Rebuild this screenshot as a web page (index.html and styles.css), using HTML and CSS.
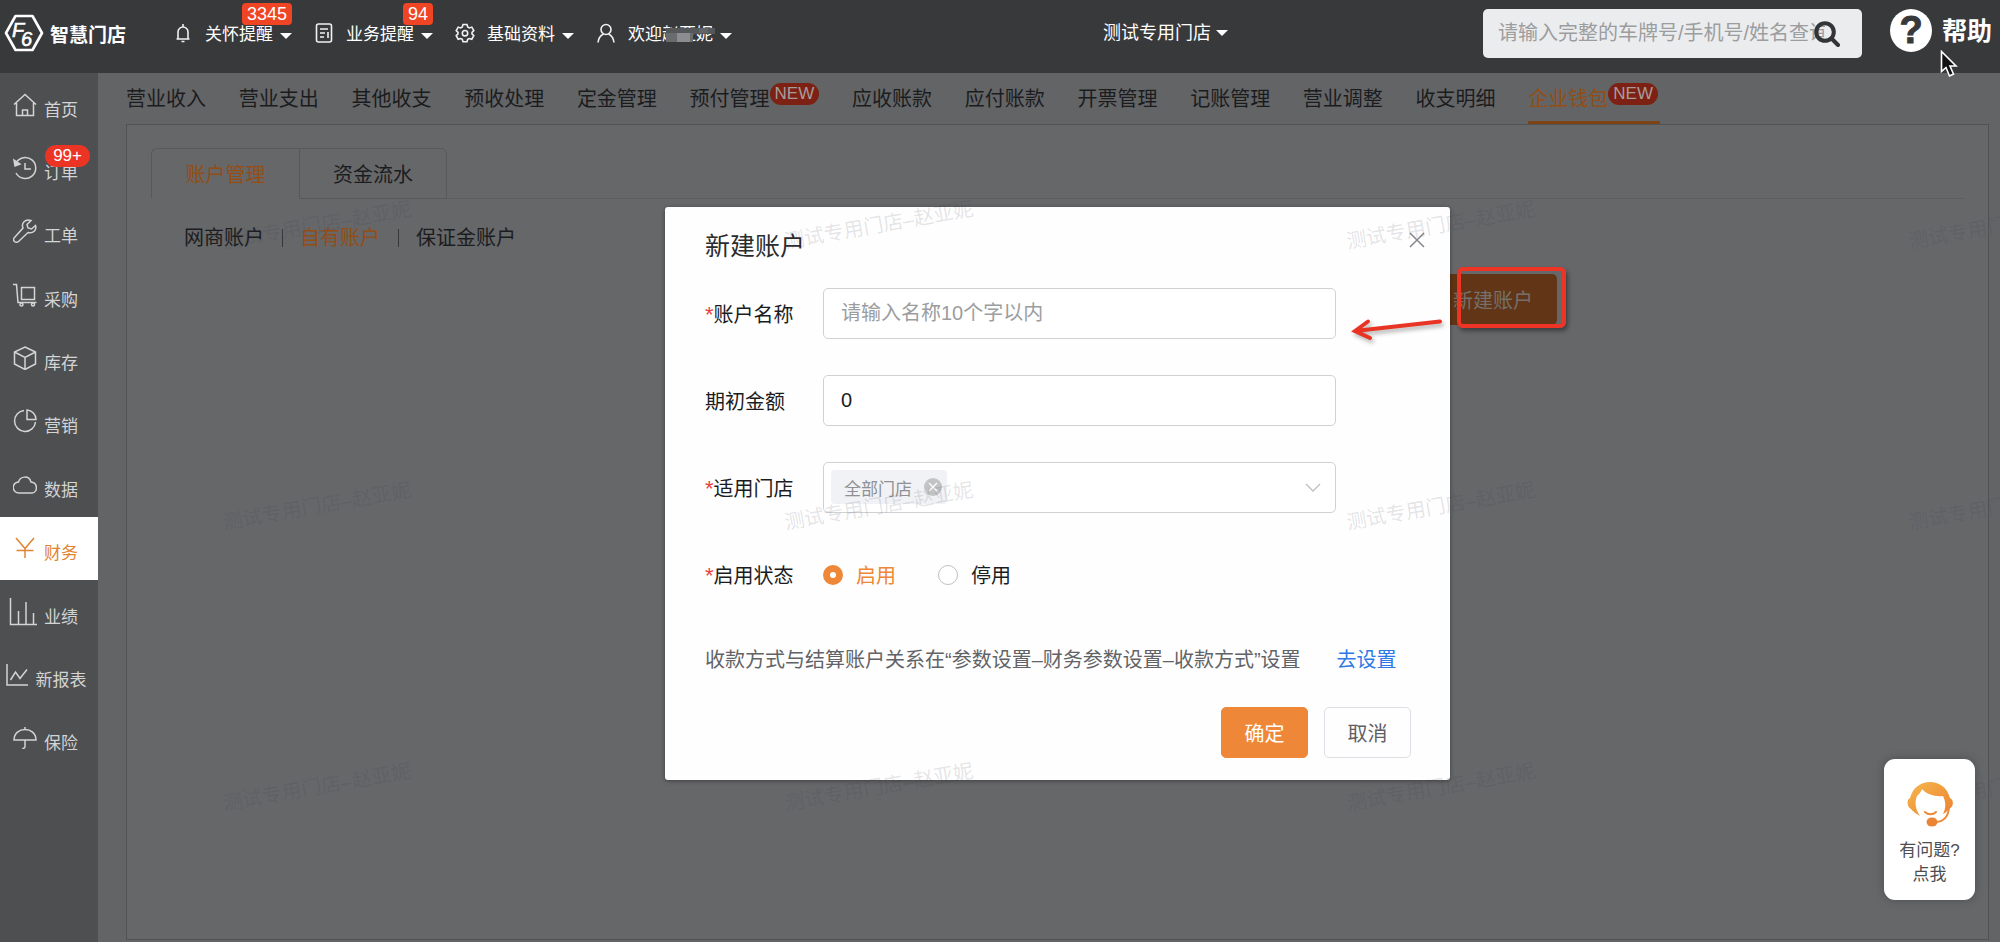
FILE: index.html
```html
<!DOCTYPE html>
<html lang="zh-CN">
<head>
<meta charset="utf-8">
<title>智慧门店 - 企业钱包</title>
<link rel="stylesheet" href="styles.css">
</head>
<body>
<div class="app">
  <header class="topbar">
    <a class="logo" href="#">
      <svg class="logo-mark" viewBox="0 0 40 38" aria-hidden="true">
        <path d="M11.500 2h17L38 19l-9.500 17h-17L2 19z" fill="none" stroke="#fff" stroke-width="2.600" stroke-linejoin="round"/>
        <text class="logo-f" x="8" y="23">F</text>
        <text class="logo-f" x="17" y="32">6</text>
      </svg>
      <span>智慧门店</span>
    </a>
    <nav class="topnav">
      <button class="top-item" type="button">
        <svg class="top-icon" viewBox="0 0 20 20"><path d="M3.500 16h13M5 16V9a5 5 0 0 1 10 0v7M10 4V1M8.500 18.500h3"/></svg>
        <span>关怀提醒</span><i class="caret"></i><b class="count">3345</b>
      </button>
      <button class="top-item" type="button">
        <svg class="top-icon" viewBox="0 0 20 20"><rect x="2.500" y="1" width="15" height="18" rx="2"/><path d="M6 6h8M6 10h5M6 14h4M14 9v6"/></svg>
        <span>业务提醒</span><i class="caret"></i><b class="count">94</b>
      </button>
      <button class="top-item" type="button">
        <svg class="top-icon" viewBox="0 0 20 20"><path d="M8 1.500h4l.7 2.500 1.600.9 2.500-.8 2 3.500-1.800 1.800v1.500l1.800 1.800-2 3.500-2.500-.7-1.600.9-.7 2.400H8l-.7-2.400-1.600-.9-2.500.7-2-3.500L3 10.900V9.400L1.200 7.600l2-3.500 2.500.8L7.300 4z"/><circle cx="10" cy="10.200" r="2.700"/></svg>
        <span>基础资料</span><i class="caret"></i>
      </button>
      <button class="top-item" type="button">
        <svg class="top-icon" viewBox="0 0 20 20"><circle cx="10" cy="6.500" r="5"/><path d="M2 19.500c.5-4.500 2.500-7 5.500-8.500M18 19.500c-.5-4.500-2.500-7-5.500-8.500"/></svg>
        <span class="user">欢迎赵亚妮<svg class="mosaic" viewBox="0 0 52 14" aria-hidden="true"><path fill="#55585a" d="M3 0h49v6H3z"/><path fill="#696c6e" d="M3 5h27v9H3z"/><path fill="#8b8d8f" d="M14 5h13v9H14z"/><path fill="#626567" d="M36 0h9v5h-9z"/></svg></span><i class="caret"></i>
      </button>
    </nav>
    <div class="store-wrap"><button class="store" type="button">测试专用门店<i class="caret"></i></button></div>
    <div class="search">
      <input type="text" aria-label="搜索" placeholder="请输入完整的车牌号/手机号/姓名查询">
      <button type="button" aria-label="查询"><svg viewBox="0 0 26 26"><circle cx="11" cy="11" r="8.800"/><path d="M18 18l6 6"/></svg></button>
    </div>
    <a class="help" href="#"><span class="help-mark">?</span><span>帮助</span></a>
  </header>

  <div class="body">
    <nav class="side">
      <a href="#"><svg viewBox="0 0 24 24"><path d="M1 11.500L12 1.500l11 10M3.500 10v12.500h17V10M9.500 22v-5h5v5"/></svg>首页</a>
      <a href="#"><svg viewBox="0 0 24 24"><path d="M3 7a10.500 10.500 0 1 1 0 10M12 7v6h6"/><path class="solid" d="M1 4l1 6 5-2z"/></svg>订单<b class="dot">99+</b></a>
      <a href="#"><svg viewBox="0 0 24 24"><path d="M22.500 6.500l-4 3.500-3.500-1-1-3.500 4-4c-6-2-10 3-8 7.500L1.500 18.500a2.800 2.800 0 0 0 4 4L15 13.500c5 1.500 9-2.500 7.500-7z"/></svg>工单</a>
      <a href="#"><svg viewBox="0 0 24 24"><path d="M0 1.500h3.500L5 19.500h18.500M8.500 4.500h13v12h-13z"/><circle cx="8.500" cy="21.500" r="1.500"/><circle cx="20" cy="21.500" r="1.500"/></svg>采购</a>
      <a href="#"><svg viewBox="0 0 24 24"><path d="M12 1l10.500 5v12L12 23.500 1.500 18V6zM1.500 6L12 11.500 22.500 6M12 11.500v12"/></svg>库存</a>
      <a href="#"><svg viewBox="0 0 24 24"><path d="M11 1.500A10.500 10.500 0 1 0 22.500 13M14 1v9.500h9A9.500 9.500 0 0 0 14 1z"/></svg>营销</a>
      <a href="#"><svg viewBox="0 0 24 24"><path d="M6 20a5.500 5.500 0 0 1-.5-11C7 3 16 2 18 9c7 .5 7 10.500 1 11z"/></svg>数据</a>
      <a href="#" class="on"><svg viewBox="0 0 24 24"><path d="M3 2l9 10.500L21 2M3.500 14.500h17M12 12.500v9.500"/></svg>财务</a>
      <a href="#"><svg class="lg" viewBox="0 0 28 28"><path d="M1.500 0v26.500H28M9.500 26V13M17 26V4M24.500 26V15"/></svg>业绩</a>
      <a href="#"><svg viewBox="0 0 24 24"><path d="M2 1v21h21M5.500 17l5-8 4.500 6.500L22 6.500"/></svg>新报表</a>
      <a href="#"><svg viewBox="0 0 24 24"><path d="M1 14C1 0 23 0 23 14zM12 1v2.500M12 14v6.500c0 2-2 2-2.500 1.500"/></svg>保险</a>
    </nav>

    <main class="main">
      <nav class="tabs">
        <a href="#">营业收入</a><a href="#">营业支出</a><a href="#">其他收支</a><a href="#">预收处理</a><a href="#">定金管理</a><a href="#">预付管理<b class="new">NEW</b></a><a href="#">应收账款</a><a href="#">应付账款</a><a href="#">开票管理</a><a href="#">记账管理</a><a href="#">营业调整</a><a href="#">收支明细</a><a href="#" class="on">企业钱包<b class="new">NEW</b></a>
      </nav>
      <section class="panel">
        <div class="cards">
          <button class="card-tab on" type="button">账户管理</button>
          <button class="card-tab" type="button">资金流水</button>
          <span class="card-rest"></span>
        </div>
        <nav class="sub">
          <a href="#">网商账户</a><a href="#" class="on">自有账户</a><a href="#">保证金账户</a>
        </nav>
        <div class="actions"><span class="marked"><button class="create" type="button">新建账户</button></span></div>
      </section>

      <div class="overlay">
        <form class="dialog" role="dialog" aria-labelledby="dlg-title">
          <div class="dialog-head">
            <h2 id="dlg-title">新建账户</h2>
            <button class="close" type="button" aria-label="关闭"><svg viewBox="0 0 14 14"><path d="M0 0l14 14M14 0L0 14"/></svg></button>
          </div>
          <div class="fields">
            <div class="field"><label for="name"><em>*</em>账户名称</label><input class="box" id="name" type="text" placeholder="请输入名称10个字以内"></div>
            <div class="field"><label for="amount">期初金额</label><input class="box" id="amount" type="text" value="0"></div>
            <div class="field"><label for="shop"><em>*</em>适用门店</label>
              <div class="pick">
                <select class="box" id="shop"><option></option></select>
                <span class="tag">全部门店<button type="button" aria-label="移除"><svg viewBox="0 0 18 18"><path d="M5 5l8 8M13 5l-8 8"/></svg></button></span>
                <svg class="chev" viewBox="0 0 16 9"><path d="M1 1l7 7 7-7"/></svg>
              </div>
            </div>
            <div class="field"><span class="lab"><em>*</em>启用状态</span>
              <div class="radios">
                <label><input type="radio" name="state" checked><span>启用</span></label>
                <label><input type="radio" name="state"><span>停用</span></label>
              </div>
            </div>
          </div>
          <p class="note">收款方式与结算账户关系在“参数设置–财务参数设置–收款方式”设置<a href="#">去设置</a></p>
          <div class="foot"><button class="btn primary" type="button">确定</button><button class="btn" type="button">取消</button></div>
        </form>
      </div>

      <svg class="arrow" viewBox="0 0 94 24" aria-hidden="true"><path d="M90 4.500L5 14M18 4.500L5 14l15 7"/></svg>

      <div class="marks" aria-hidden="true">
        <span>测试专用门店–赵亚妮</span><span>测试专用门店–赵亚妮</span><span>测试专用门店–赵亚妮</span><span>测试专用门店–赵亚妮</span>
        <span>测试专用门店–赵亚妮</span><span>测试专用门店–赵亚妮</span><span>测试专用门店–赵亚妮</span><span>测试专用门店–赵亚妮</span>
        <span>测试专用门店–赵亚妮</span><span>测试专用门店–赵亚妮</span><span>测试专用门店–赵亚妮</span><span>测试专用门店–赵亚妮</span>
      </div>

      <button class="support" type="button">
        <svg viewBox="0 0 46 46" aria-hidden="true">
          <defs><linearGradient id="g" x1="0" y1="0" x2="1" y2="1"><stop offset="0" stop-color="#f5b94d"/><stop offset="1" stop-color="#ec7f31"/></linearGradient></defs>
          <path fill="url(#g)" d="M13 35C6 31 4 28 4 28-1 25 0 18 3 17 6 6 14 1 23 1s17 5 20 16c4 2 4 9-1 11 0 0-2 3-6 5 3-6 3-12 0-18C28 16 19 13 15 8c-1 3-3 5-5 7-3 8-1 14 3 20z"/>
          <path fill="none" stroke="#ec8a38" stroke-width="2" stroke-linecap="round" d="M18 31c3 3 8 3 11 0M42 27c-1 9-6 14-14 14"/>
          <ellipse cx="25" cy="41" rx="5.500" ry="4.500" fill="#ec8436"/>
        </svg>
        <span>有问题?</span><span>点我</span>
      </button>
    </main>
  </div>
  <svg class="cursor" viewBox="0 0 18 28" aria-hidden="true"><path d="M1.500 1.500v20l4.500-4 3.500 8.500 4-2-3.500-8h6z" fill="#111" stroke="#fff" stroke-width="1.600"/></svg>
</div>
</body>
</html>
```

FILE: styles.css
```css
* { box-sizing: border-box; }

body {
  margin: 0;
  font-family: "Liberation Sans", "Noto Sans CJK SC", sans-serif;
  font-size: 20px;
  color: #1b1c1e;
}

a { color: inherit; text-decoration: none; }

button {
  font: inherit;
  color: inherit;
  background: none;
  border: 0;
  padding: 0;
}

input, select { font: inherit; color: inherit; }

.app {
  position: relative;
  display: flex;
  flex-direction: column;
  min-height: 100vh;
  overflow: hidden;
}

/* top bar */
.topbar {
  display: flex;
  align-items: center;
  height: 73px;
  padding: 0 8px 7px 4px;
  background: #38393b;
  color: #fff;
}

.logo {
  display: flex;
  align-items: center;
  gap: 6px;
  width: 169px;
  font-size: 19px;
  font-weight: 700;
}

.logo-mark { width: 40px; height: 38px; }
.logo-f { font: italic 400 20px "Liberation Sans", sans-serif; fill: #fff; stroke: #fff; stroke-width: .6; }

.topnav { display: flex; gap: 22px; }

.top-item {
  position: relative;
  display: flex;
  align-items: center;
  font-size: 17px;
  line-height: 26px;
  padding-top: 3px;
}

.top-icon {
  width: 20px;
  height: 20px;
  margin: 0 12px 3px 0;
  fill: none;
  stroke: #eef2f1;
  stroke-width: 1.6;
}

.caret {
  margin-left: 5px;
  border: 6px solid transparent;
  border-top: 6px solid #fff;
  border-bottom: 0;
}

.top-item .caret { margin: 3px 0 0 7px; }

.count {
  position: absolute;
  top: -16px;
  right: 0;
  padding: 0 5px;
  border-radius: 4px;
  background: #f04524;
  font-size: 18px;
  font-weight: 400;
  line-height: 22px;
}

.user { position: relative; }

.mosaic {
  position: absolute;
  left: 35px;
  top: 6px;
  width: 52px;
  height: 14px;
}

.store-wrap {
  flex: 1;
  display: flex;
  justify-content: center;
  padding-left: 116px;
}

.store {
  display: flex;
  align-items: center;
  font-size: 18px;
  line-height: 26px;
}

.search { position: relative; width: 379px; }

.search input {
  display: block;
  width: 100%;
  height: 49px;
  padding: 0 37px 0 15px;
  border: 0;
  border-radius: 5px;
  background: #ebecee;
}

.search input::placeholder, .box::placeholder { color: #9c9d9f; opacity: 1; }

.search button {
  position: absolute;
  right: 22px;
  top: 12px;
  width: 26px;
  height: 26px;
}

.search svg {
  display: block;
  fill: none;
  stroke: #333436;
  stroke-width: 4;
  stroke-linecap: round;
}

.help {
  display: flex;
  align-items: center;
  gap: 10px;
  margin: 0 0 5px 28px;
  font-size: 25px;
  font-weight: 700;
  line-height: 36px;
}

.help-mark {
  width: 42px;
  border-radius: 50%;
  background: #fff;
  color: #38393b;
  font-size: 38px;
  line-height: 43px;
  text-align: center;
  -webkit-text-stroke: 1px #38393b;
}

.cursor {
  position: absolute;
  left: 1940px;
  top: 50px;
  width: 18px;
  height: 28px;
}

/* side menu */
.body { flex: 1; display: flex; }

.side {
  display: grid;
  grid-auto-rows: 1fr;
  align-self: stretch;
  width: 98px;
  padding-bottom: 172px;
  background: #4e4f51;
  color: #d3d4d5;
  font-size: 17px;
}

.side a {
  position: relative;
  display: flex;
  align-items: center;
  justify-content: center;
  gap: 7px;
  padding: 7px 7px 0 0;
}

.side svg {
  width: 24px;
  height: 24px;
  margin-bottom: 7px;
  fill: none;
  stroke: currentColor;
  stroke-width: 1.5;
}

.side .lg { width: 28px; height: 28px; margin-left: -4px; }
.side .solid { fill: currentColor; }
.side .on { background: #fff; color: #e08432; }

.dot {
  position: absolute;
  top: 9px;
  right: 8px;
  padding: 0 8px;
  border-radius: 11px;
  background: #ec3424;
  color: #fff;
  font-size: 17px;
  font-weight: 400;
  line-height: 22px;
}

/* page area */
.main {
  position: relative;
  flex: 1;
  display: flex;
  flex-direction: column;
  padding: 0 11px 2px 28px;
  background: #636466;
  overflow: hidden;
}

.tabs {
  display: flex;
  justify-content: space-between;
  height: 51px;
  margin-right: 329px;
}

.tabs a {
  display: flex;
  align-items: center;
  border-bottom: 3px solid transparent;
  white-space: nowrap;
}

.tabs .on { padding-right: 2px; color: #934e16; border-color: #7e4315; }

.new {
  margin-bottom: 6px;
  padding: 0 5px;
  border-radius: 11px;
  background: #7c2114;
  color: #a89c9a;
  font-size: 17px;
  font-weight: 400;
  line-height: 22px;
}

.panel {
  flex: 1;
  border: 1px solid #515254;
  background: #666769;
  padding: 23px 23px 0 24px;
}

.cards { display: flex; }

.card-tab {
  width: 148px;
  height: 51px;
  border: 1px solid #58595b;
  border-radius: 0 6px 0 0;
}

.card-tab.on {
  border-right: 0;
  border-bottom-color: transparent;
  border-radius: 6px 0 0 0;
  color: #934e16;
}

.card-rest { flex: 1; border-bottom: 1px solid #5c5d5f; }

.sub { display: flex; padding: 25px 0 0 33px; line-height: 28px; }

.sub a + a {
  position: relative;
  margin-left: 18px;
  padding-left: 18px;
}

.sub a + a::before {
  content: "";
  position: absolute;
  left: 0;
  top: 5px;
  height: 18px;
  border-left: 1px solid #37383a;
}

.sub .on { color: #934e16; }

.actions { display: flex; justify-content: flex-end; padding: 22px 408px 0 0; }
.marked { position: relative; }

.create {
  display: block;
  width: 128px;
  height: 51px;
  border-radius: 5px;
  background: #613515;
  color: #75706c;
}

.marked::after {
  content: "";
  position: absolute;
  left: 28px;
  right: -9px;
  top: -7px;
  bottom: -3px;
  border: 4px solid #ee3424;
  border-radius: 6px;
  box-shadow: 2px 3px 4px rgba(0, 0, 0, .4);
}

/* dialog */
.overlay {
  position: absolute;
  inset: 0;
  display: flex;
  justify-content: center;
  align-items: flex-start;
  padding: 134px 0 0 17px;
}

.dialog {
  width: 785px;
  padding: 22px 39px 22px 40px;
  border-radius: 3px;
  background: #fefefe;
  box-shadow: 0 1px 4px rgba(0, 0, 0, .4);
}

.dialog-head {
  display: flex;
  justify-content: space-between;
  margin-bottom: 25px;
}

.dialog h2 {
  margin: 0;
  font-size: 25px;
  font-weight: 400;
  line-height: 34px;
  color: #2b2c2e;
}

.close { margin: 0 -13px 12px 0; width: 14px; }
.close svg { display: block; fill: none; stroke: #85878b; stroke-width: 1.5; overflow: visible; }

.fields { display: grid; gap: 36px; padding-right: 75px; }

.field {
  display: grid;
  grid-template-columns: 118px 1fr;
  align-items: center;
  min-height: 51px;
}

.field em { color: #e8443a; font-style: normal; font-size: 22px; }

.box {
  display: block;
  width: 100%;
  height: 51px;
  padding: 0 17px;
  border: 1px solid #d0d1d3;
  border-radius: 5px;
  background: #fff;
  appearance: none;
}

.pick { position: relative; }

.tag {
  position: absolute;
  left: 8px;
  top: 8px;
  display: flex;
  align-items: center;
  gap: 12px;
  height: 34px;
  padding: 0 5px 0 13px;
  border-radius: 4px;
  background: #f0f2f5;
  color: #8f9194;
  font-size: 17px;
}

.tag button { width: 18px; height: 18px; border-radius: 50%; background: #c2c3c5; }
.tag svg { display: block; stroke: #fff; stroke-width: 1.2; }

.chev {
  position: absolute;
  right: 15px;
  top: 21px;
  width: 16px;
  height: 9px;
  fill: none;
  stroke: #bdbfc3;
  stroke-width: 1.3;
}

.radios { display: flex; gap: 42px; }
.radios label { display: flex; align-items: center; gap: 13px; }

.radios input {
  appearance: none;
  width: 20px;
  height: 20px;
  margin: 0;
  border: 1px solid #bfc0c2;
  border-radius: 50%;
  background: #fff;
}

.radios input:checked { border: 7px solid #ee8737; }
.radios input:checked + span { color: #ee8737; }

.note { margin: 45px 0 0; line-height: 30px; color: #626366; white-space: nowrap; }
.note a { margin-left: 36px; color: #2f78e6; }

.foot { display: flex; justify-content: flex-end; gap: 16px; margin-top: 32px; }

.btn {
  width: 87px;
  height: 51px;
  border: 1px solid #dddfe4;
  border-radius: 5px;
  color: #5f6063;
}

.primary { border-color: #ee8737; background: #ee8737; color: #fff; }

.arrow {
  position: absolute;
  left: 1252px;
  top: 244px;
  width: 94px;
  height: 24px;
  fill: none;
  stroke: #e93425;
  stroke-width: 4;
  stroke-linecap: round;
  filter: drop-shadow(2px 3px 2px rgba(0, 0, 0, .3));
  overflow: visible;
}

/* tiled watermark */
.marks {
  position: absolute;
  left: -62px;
  top: 10px;
  display: grid;
  grid-template-columns: repeat(4, 562px);
  grid-auto-rows: 281px;
  place-items: center;
  color: rgba(60, 60, 80, .14);
  pointer-events: none;
}

.marks span { transform: rotate(-10deg); }

.support {
  position: absolute;
  right: 25px;
  bottom: 42px;
  display: flex;
  flex-direction: column;
  align-items: center;
  width: 91px;
  padding: 22px 0 13px;
  border-radius: 11px;
  background: #fff;
  color: #4c4d50;
  font-size: 17px;
  line-height: 24px;
  box-shadow: 0 0 10px rgba(0, 0, 0, .25);
}

.support svg { width: 46px; height: 46px; margin-bottom: 12px; }
```
